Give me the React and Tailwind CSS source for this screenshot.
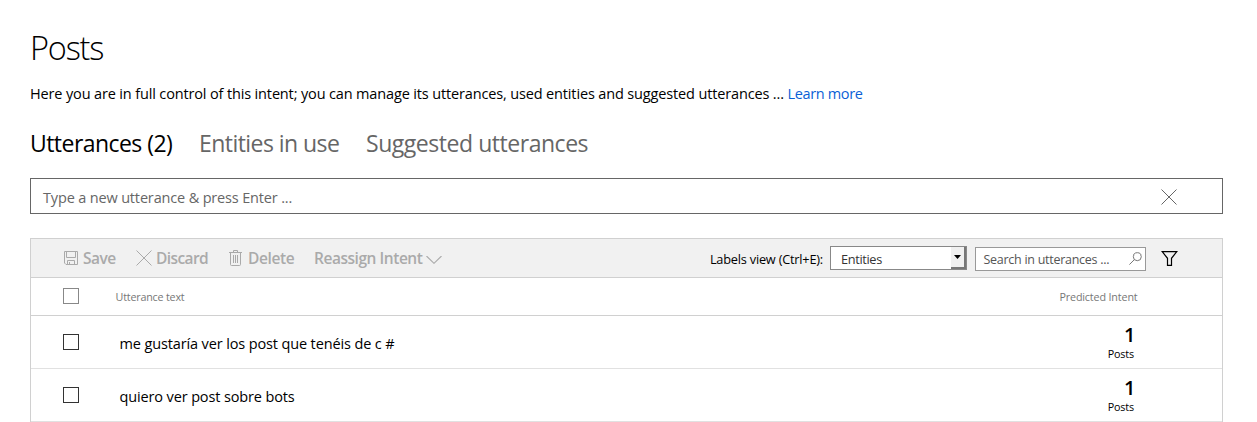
function Cross({ className }) {
  return (
    <svg className={className} viewBox="0 0 16 16" fill="none" stroke="currentColor" strokeWidth="1">
      <path d="M0.5 0.5L15.5 15.5M15.5 0.5L0.5 15.5" />
    </svg>
  );
}

function SaveIcon() {
  return (
    <svg className="h-[14px] w-[14px]" viewBox="0 0 14 14" fill="none" stroke="currentColor" strokeWidth="1">
      <path d="M0.5 0.5H13.5V13.5H2L0.5 12Z" />
      <path d="M2.5 0.5V6.5H11.5V0.5M3.5 13.5V9.5H10.5V13.5M5.5 11V13.5" />
    </svg>
  );
}

function TrashIcon() {
  return (
    <svg className="h-4 w-[13px]" viewBox="0 0 13 16" fill="none" stroke="currentColor" strokeWidth="1">
      <path d="M0 2.5H13M4.5 2.5V0.5H8.5V2.5M1.5 2.5V14.5Q1.5 15.5 2.5 15.5H10.5Q11.5 15.5 11.5 14.5V2.5M4.5 5V13M6.5 5V13M8.5 5V13" />
    </svg>
  );
}

function ChevronIcon() {
  return (
    <svg className="mt-[3px] h-2 w-4" viewBox="0 0 16 8" fill="none" stroke="currentColor" strokeWidth="1.1">
      <path d="M0.5 0L8 7.3L15.5 0" />
    </svg>
  );
}

function SearchIcon() {
  return (
    <svg className="h-[13px] w-[13px] text-[#777]" viewBox="0 0 13 13" fill="none" stroke="currentColor" strokeWidth="1">
      <circle cx="8.3" cy="4.7" r="4" />
      <path d="M5.4 7.6L0.4 12.6" />
    </svg>
  );
}

function FilterIcon() {
  return (
    <svg className="h-[15px] w-[17px]" viewBox="0 0 17 15" fill="none" stroke="currentColor" strokeWidth="1.2">
      <path d="M1.2 0.6H15.8L10.5 7.3V14.4H6.5V7.3Z" />
    </svg>
  );
}

function Row({ text }) {
  return (
    <div className="flex h-[53px] border-b border-[#e1e1e1] pl-8">
      <span className="mt-[18px] h-4 w-4 border border-[#333]" />
      <span className="mt-[18px] ml-[40.5px] text-[14.5px] leading-5 tracking-[-0.13px]">{text}</span>
      <div className="mr-[88px] ml-auto flex flex-col items-end pt-2">
        <span className="-mr-[1.5px] text-[20px] leading-[22px] font-semibold">1</span>
        <span className="text-[10.75px] leading-4 tracking-[-0.15px]">Posts</span>
      </div>
    </div>
  );
}

export default function App() {
  return (
    <main className="h-[422px] w-[1257px] overflow-hidden bg-white pr-[34px] pl-[30px] font-['Open_Sans','Noto_Sans',sans-serif] whitespace-nowrap text-black">
      <h1 className="pt-7 text-[32.5px] leading-10 font-light tracking-[-1.2px]">Posts</h1>
      <p className="mt-4 text-[14.5px] leading-5 tracking-[-0.145px]">
        Here you are in full control of this intent; you can manage its utterances, used entities and suggested utterances ...{' '}
        <a className="tracking-[-0.35px] text-[#0a5fd6]">Learn more</a>
      </p>
      <nav className="mt-[23px] flex h-8 text-[23px] leading-8 text-[#666]">
        <span className="w-[169px] tracking-[-0.55px] text-black">Utterances (2)</span>
        <span className="w-[167px] tracking-[-0.55px]">Entities in use</span>
        <span className="tracking-[-0.46px]">Suggested utterances</span>
      </nav>
      <div className="mt-[19px] flex h-9 items-center border border-[#666] pr-[45px] pl-3 text-[#666]">
        <span className="pt-1 text-[14.5px] leading-5 tracking-[-0.16px]">Type a new utterance &amp; press Enter ...</span>
        <Cross className="mt-0.5 ml-auto h-4 w-4" />
      </div>
      <section className="mt-6 border-x border-t border-[#d0d0d0]">
        <div className="flex h-[39px] items-center border-b border-[#d0d0d0] bg-[#f1f1f1] pl-[33px] text-[#aaa]">
          <div className="flex text-[15.5px] leading-5 font-semibold">
            <span className="flex w-[72px] items-center gap-[5px]"><SaveIcon /><span className="tracking-[-0.5px]">Save</span></span>
            <span className="flex w-[93px] items-center gap-1"><Cross className="h-4 w-4" /><span className="tracking-[-0.6px]">Discard</span></span>
            <span className="flex w-[85px] items-center gap-[6px]"><TrashIcon /><span className="tracking-[-0.4px]">Delete</span></span>
            <span className="flex items-center gap-1"><span className="tracking-[-0.46px]">Reassign Intent</span><ChevronIcon /></span>
          </div>
          <div className="mr-11 ml-auto flex items-center text-[12.75px] text-black">
            <span className="mr-[7px] pt-[3px] tracking-[-0.21px]">Labels view (Ctrl+E):</span>
            <div className="flex h-6 w-[137px] justify-between border border-[#888] bg-white pl-[10px] text-[#333]">
              <span className="pt-0.5 leading-5 tracking-[-0.35px]">Entities</span>
              <span className="flex w-[15px] items-center justify-center border-r-2 border-b-2 border-[#777] bg-[#f0f0f0]">
                <svg className="h-[4px] w-[7px]" viewBox="0 0 7 4" fill="#000"><path d="M0 0H7L3.5 4Z" /></svg>
              </span>
            </div>
            <div className="ml-2 mt-px flex h-6 w-[171px] items-center justify-between border border-[#999] bg-white pr-[3px] pl-[7.5px] text-[#555]">
              <span className="pt-[3px] text-[12.5px] leading-5 tracking-[-0.27px]">Search in utterances ...</span>
              <SearchIcon />
            </div>
            <span className="ml-[15px]"><FilterIcon /></span>
          </div>
        </div>
        <div className="flex h-[38px] border-b border-[#d0d0d0] pl-8 text-[10.75px] leading-4 text-[#777]">
          <span className="mt-[10px] h-4 w-4 border border-[#888]" />
          <span className="mt-[11px] ml-[36.5px] tracking-[-0.2px]">Utterance text</span>
          <span className="mt-[11px] mr-[84.5px] ml-auto tracking-[-0.15px]">Predicted Intent</span>
        </div>
        <Row text="me gustaría ver los post que tenéis de c #" />
        <Row text="quiero ver post sobre bots" />
      </section>
    </main>
  );
}
